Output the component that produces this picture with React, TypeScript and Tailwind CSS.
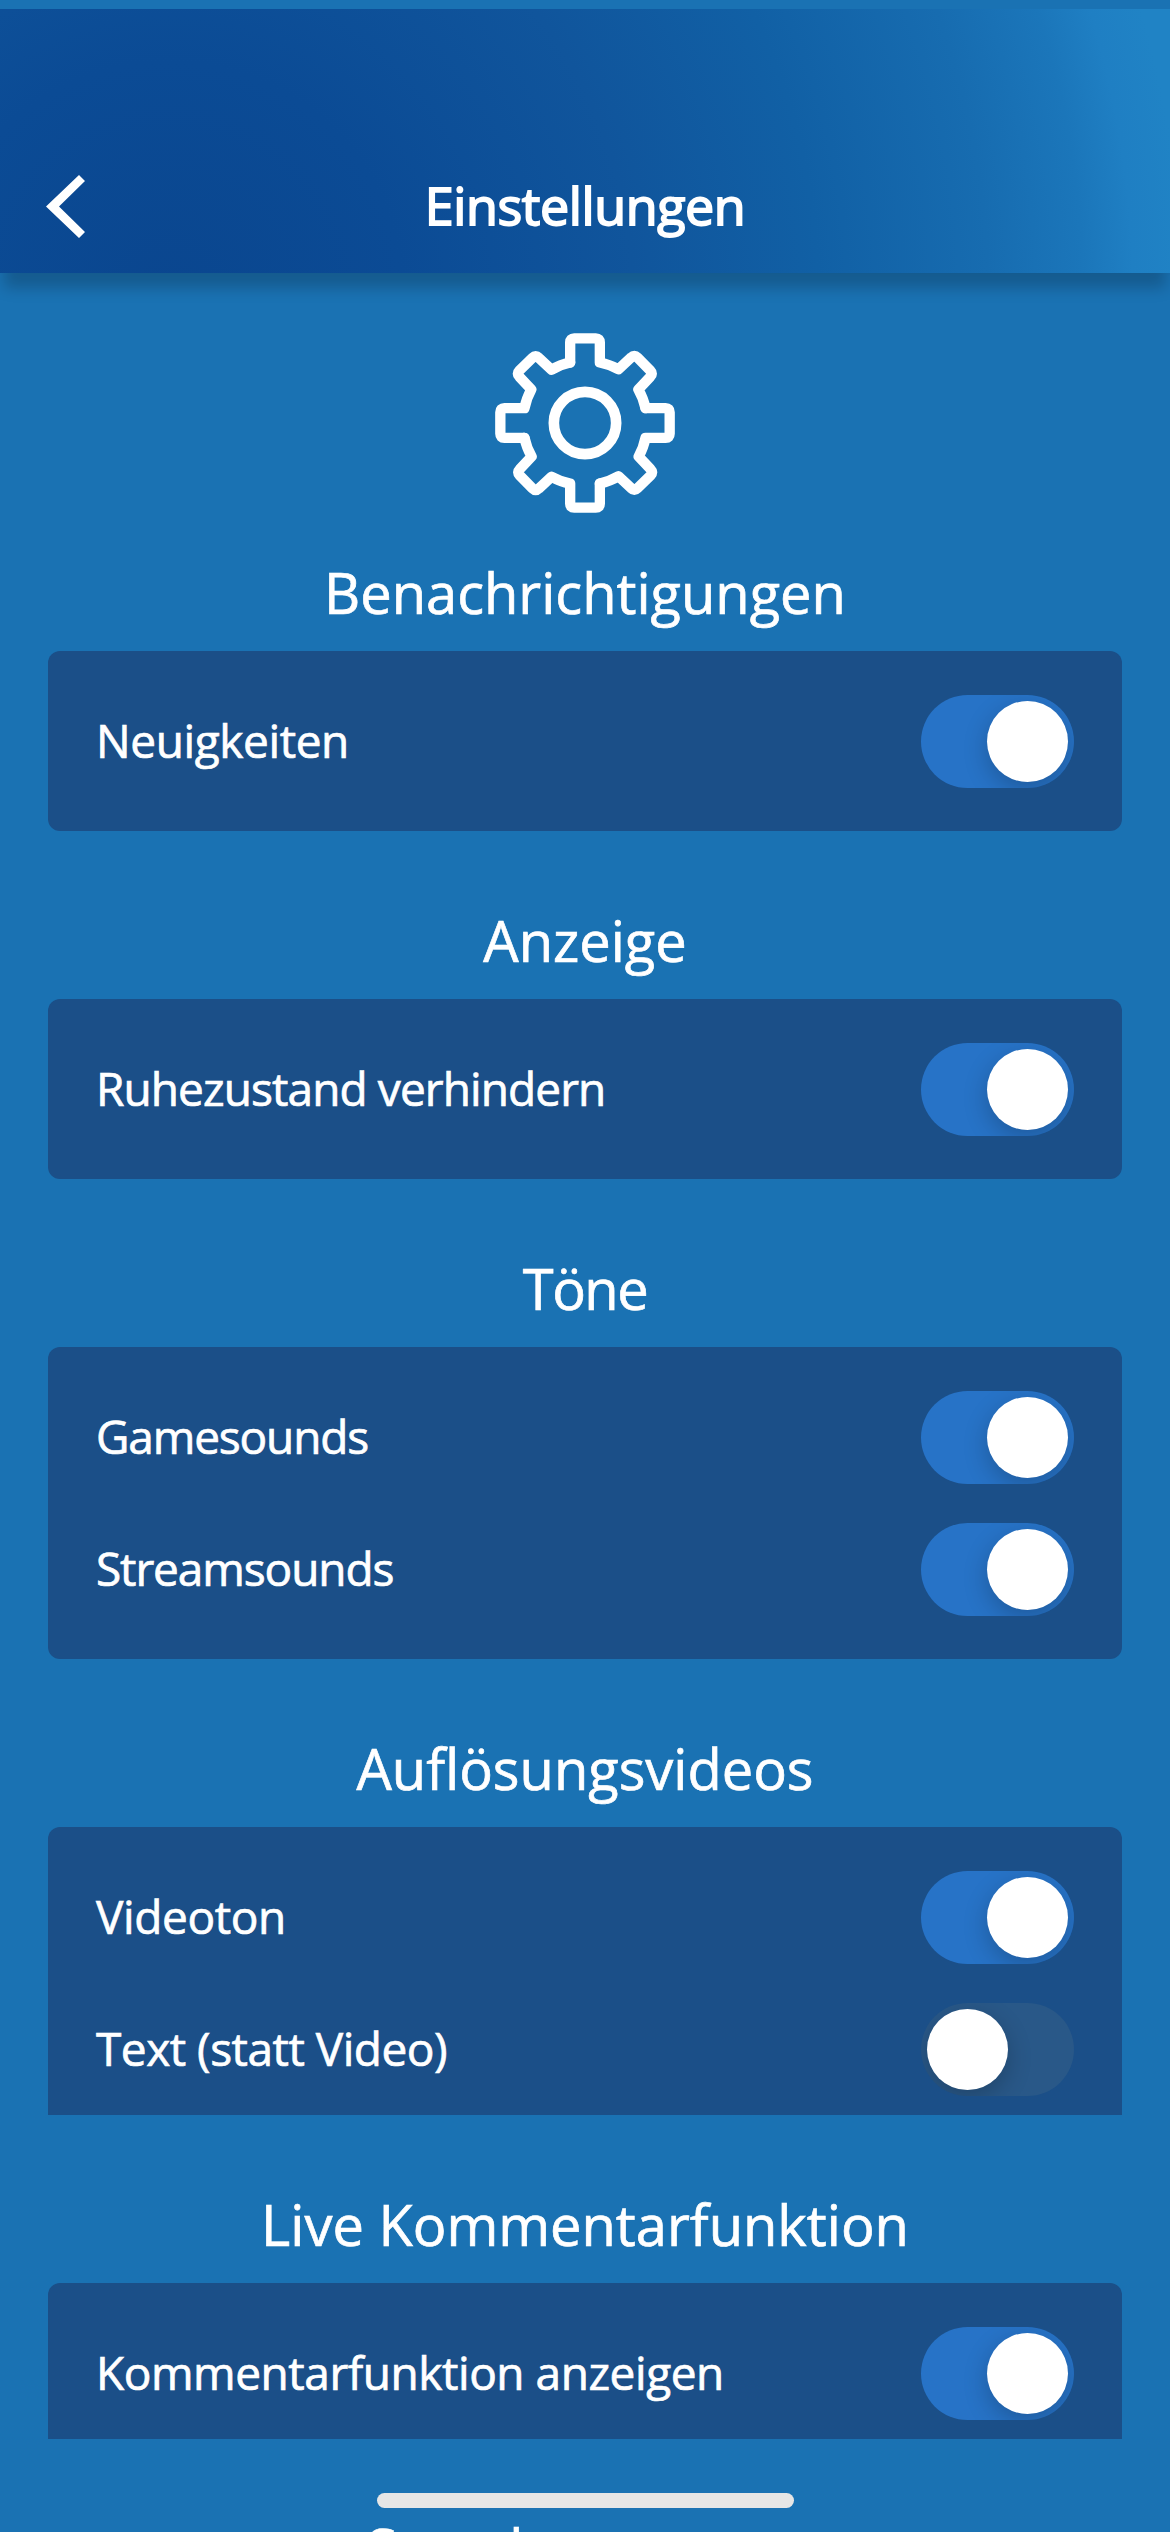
type Row = { label: string; tracking: string; on: boolean };
type Section = { title: string; tracking?: string; rows: Row[]; clipped?: boolean };

const sections: Section[] = [
  {
    title: "Benachrichtigungen",
    rows: [{ label: "Neuigkeiten", tracking: "tracking-[-0.4px]", on: true }],
  },
  {
    title: "Anzeige",
    rows: [{ label: "Ruhezustand verhindern", tracking: "tracking-[-0.9px]", on: true }],
  },
  {
    title: "Töne",
    tracking: "tracking-[-1.5px]",
    rows: [
      { label: "Gamesounds", tracking: "tracking-[-1.15px]", on: true },
      { label: "Streamsounds", tracking: "tracking-[-1.1px]", on: true },
    ],
  },
  {
    title: "Auflösungsvideos",
    clipped: true,
    rows: [
      { label: "Videoton", tracking: "tracking-[-0.4px]", on: true },
      { label: "Text (statt Video)", tracking: "tracking-[-0.5px]", on: false },
    ],
  },
  {
    title: "Live Kommentarfunktion",
    clipped: true,
    rows: [{ label: "Kommentarfunktion anzeigen", tracking: "tracking-[-0.45px]", on: true }],
  },
  { title: "Sprachsteuerung", tracking: "tracking-[-0.6px]", rows: [] },
];

function Toggle({ on }: { on: boolean }) {
  return (
    <button
      role="switch"
      aria-checked={on}
      className={`flex h-[93px] w-[153px] shrink-0 items-center overflow-hidden rounded-full px-1.5 ${
        on ? "justify-end bg-[#2773c7]" : "justify-start bg-[#295888]"
      }`}
    >
      <span className="size-[81px] rounded-full bg-white shadow-[0_8px_24px_rgba(0,0,0,0.22)]" />
    </button>
  );
}

// Upright tooth plus the diagonal one beside it; repeated for each quarter turn.
const quarter =
  "M-44.5 -181.5 L-44.5 -242 Q-44.5 -254 -32.5 -254 L32.5 -254 Q44.5 -254 44.5 -242 L44.5 -181.5 A187 187 0 0 1 100.5 -161 L139 -197 Q148 -206 157 -197 L196 -157 Q205 -148 196 -139 L160 -100.5 A187 187 0 0 1 181.5 -44.5";

function Gear() {
  return (
    <svg
      className="size-[180px]"
      viewBox="-270 -270 540 540"
      fill="none"
      stroke="white"
      strokeWidth="31"
      strokeLinejoin="round"
      strokeLinecap="round"
    >
      {[0, 90, 180, 270].map((angle) => (
        <path key={angle} d={quarter} transform={`rotate(${angle})`} />
      ))}
      <circle r="93.5" strokeWidth="32" />
    </svg>
  );
}

export default function App() {
  return (
    <main className="relative flex h-[2532px] w-[1170px] flex-col overflow-hidden bg-[#1a72b3] pt-[9px] font-['Open_Sans',sans-serif] text-white">
      <header className="grid h-[264px] shrink-0 grid-cols-[1fr_auto_1fr] items-end bg-[radial-gradient(circle_at_168px_287px,#0a468f_0px,#0b4b95_234px,#10559c_465px,#1160a5_650px,#176cb0_820px,#1b76ba_915px,#1f7fc3_965px,#2083c5_1015px)] shadow-[0_19px_14px_-4px_rgba(0,0,0,0.2)]">
        <button aria-label="Zurück" className="mb-[34px] ml-[45px] w-fit">
          <svg className="block h-[65px] w-[41px]" viewBox="0 0 41 65" fill="white">
            <path d="M34 1 L40 7 L14 32.5 L40 58 L34 64 L1 32.5 Z" />
          </svg>
        </button>
        <h1 className="mb-[28px] text-[52px] leading-[80px] tracking-[-0.4px] [-webkit-text-stroke:1.8px_white]">
          Einstellungen
        </h1>
      </header>

      <div className="mt-[60px] flex shrink-0 justify-center">
        <Gear />
      </div>

      <div className="-mt-[30px] flex shrink-0 flex-col">
        {sections.map(({ title, tracking: titleTracking, rows, clipped }) => (
          <section key={title} className="flex flex-col px-12 pt-[71px]">
            <h2
              className={`pb-[21px] text-center text-[56px] leading-[76px] [-webkit-text-stroke:0.7px_white] ${
                titleTracking ?? ""
              }`}
            >
              {title}
            </h2>
            {rows.length > 0 && (
              <div
                className={`flex flex-col gap-[39px] bg-[#1b4f88] px-12 pt-11 ${
                  clipped ? "rounded-t-xl pb-[19px]" : "rounded-xl pb-[43px]"
                }`}
              >
                {rows.map(({ label, tracking, on }) => (
                  <div key={label} className="flex items-center justify-between">
                    <span
                      className={`pb-1 text-[46px] leading-[60px] [-webkit-text-stroke:0.7px_white] ${tracking}`}
                    >
                      {label}
                    </span>
                    <Toggle on={on} />
                  </div>
                ))}
              </div>
            )}
          </section>
        ))}
      </div>

      <div className="absolute top-[2493px] left-[377px] h-[15px] w-[417px] rounded-full bg-[#e6e6e6]" />
    </main>
  );
}
